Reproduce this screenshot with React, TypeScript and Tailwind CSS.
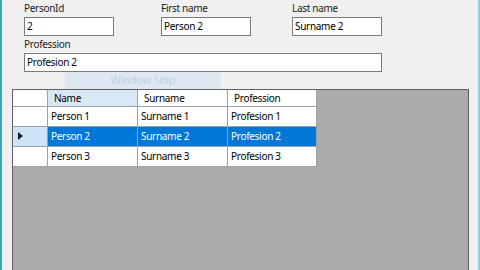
import React from "react";

const font = { fontFamily: '"Noto Sans", "Open Sans", sans-serif' };

function Field({ label, value, w }: { label: string; value: string; w: string }) {
  return (
    <div className={`flex flex-col ${w}`}>
      <div className="h-[17px] text-[10px] leading-[17px] tracking-[-0.3px] text-[#1a1a1a]">{label}</div>
      <div className="h-[19px] border border-[#7a7a7a] bg-white px-[2px] text-[10px] leading-[17px] tracking-[-0.3px] text-black">
        {value}
      </div>
    </div>
  );
}

const rows = [
  ["Person 1", "Surname 1", "Profesion 1"],
  ["Person 2", "Surname 2", "Profesion 2"],
  ["Person 3", "Surname 3", "Profesion 3"],
];

export default function App() {
  return (
    <div
      style={font}
      className="relative flex h-[270px] w-[480px] flex-col overflow-hidden border-x-2 border-l-[#3aa6bd] border-r-[#8fd3e0] bg-[#f0f0f0]"
    >
      <div className="flex pl-[22px] pt-0">
        <Field label="PersonId" value="2" w="w-[90px]" />
        <div className="w-[47px]" />
        <Field label="First name" value="Person 2" w="w-[90px]" />
        <div className="w-[41px]" />
        <Field label="Last name" value="Surname 2" w="w-[90px]" />
      </div>
      <div className="flex pl-[22px]">
        <Field label="Profession" value="Profesion 2" w="w-[358px]" />
      </div>
      <div className="flex h-[17px] pl-[63px]">
        <div className="flex w-[156px] items-center justify-center bg-[#dde8f3] text-[11px] tracking-[-0.2px] text-[#c3cfdc]">
          Window Snip
        </div>
      </div>
      <div className="ml-[10px] flex h-[210px] w-[457px] shrink-0 flex-col border border-[#5f5f5f] bg-[#ababab]">
        <div className="flex w-fit flex-col bg-white text-[10px] tracking-[-0.3px] text-black">
          <div className="flex h-[17px] border-b border-[#a0a0a0]">
            <div className="w-[35px] border-r border-[#a0a0a0]" />
            <div className="w-[90px] border-r border-[#a0a0a0] bg-[#d9e8f6] pl-[6px] leading-[16px]">Name</div>
            <div className="w-[90px] border-r border-[#a0a0a0] pl-[6px] leading-[16px]">Surname</div>
            <div className="w-[89px] border-r border-[#a0a0a0] pl-[6px] leading-[16px]">Profession</div>
          </div>
          {rows.map((r, i) => {
            const sel = i === 1;
            return (
              <div key={i} className="flex h-[20px] border-b border-[#a0a0a0]">
                <div
                  className={`flex w-[35px] items-center border-r border-[#a0a0a0] pl-[5px] ${sel ? "bg-[#cce4f7]" : "bg-white"}`}
                >
                  {sel && (
                    <svg width="5" height="8" viewBox="0 0 5 8">
                      <path d="M0 0 L5 4 L0 8 Z" fill="#1a1a1a" />
                    </svg>
                  )}
                </div>
                {r.map((c, j) => (
                  <div
                    key={j}
                    className={`${j === 2 ? "w-[89px]" : "w-[90px]"} border-r border-[#a0a0a0] pl-[3px] leading-[19px] ${sel ? "bg-[#0078d7] text-white" : ""}`}
                  >
                    {c}
                  </div>
                ))}
              </div>
            );
          })}
        </div>
      </div>
    </div>
  );
}
